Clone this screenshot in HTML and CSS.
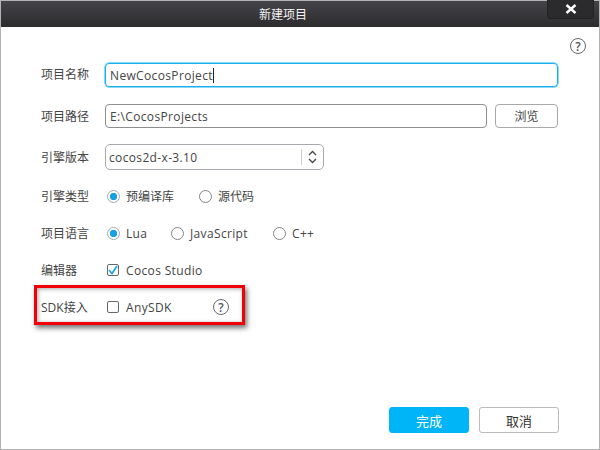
FILE: index.html
```html
<!DOCTYPE html>
<html lang="zh-CN">
<head>
  <meta charset="UTF-8" />
  <title>新建项目</title>
  <link rel="stylesheet" href="styles.css">
</head>
<body>
  <div class="dialog">
    <div class="titlebar">
      <span>新建项目</span>
      <button class="close">
        <svg width="14" height="10" viewBox="0 0 14 10"><path d="M2.5 1l9 8M11.5 1l-9 8" stroke="#fff" stroke-width="2.4" fill="none"/></svg>
      </button>
    </div>

    <div class="help-row">
      <span class="help">?</span>
    </div>

    <div class="form">
      <div class="row row-name">
        <label>项目名称</label>
        <div class="input input-focus"><span class="en">NewCocosProject</span><i class="caret"></i></div>
      </div>
      <div class="row row-path">
        <label>项目路径</label>
        <div class="input input-path"><span class="en">E:\CocosProjects</span></div>
        <button class="browse">浏览</button>
      </div>
      <div class="row row-select">
        <label>引擎版本</label>
        <div class="select">
          <span class="select-text en">cocos2d-x-3.10</span>
          <span class="select-arrows">
            <svg width="9" height="14" viewBox="0 0 9 14"><path d="M1 5l3.5-3.5L8 5M1 9l3.5 3.5L8 9" stroke="#444" stroke-width="1.3" fill="none"/></svg>
          </span>
        </div>
      </div>
      <div class="row">
        <label>引擎类型</label>
        <div class="option option-type"><i class="radio radio-on"></i>预编译库</div>
        <div class="option"><i class="radio"></i>源代码</div>
      </div>
      <div class="row">
        <label>项目语言</label>
        <div class="option option-lua"><i class="radio radio-on"></i><span class="en">Lua</span></div>
        <div class="option option-js"><i class="radio"></i><span class="en">JavaScript</span></div>
        <div class="option"><i class="radio"></i><span class="en">C++</span></div>
      </div>
      <div class="row">
        <label>编辑器</label>
        <div class="option">
          <i class="check check-on">
            <svg width="10" height="10" viewBox="0 0 10 10"><path d="M1 5l3 3.5L9 1" stroke="#1aa7e8" stroke-width="1.8" fill="none"/></svg>
          </i><span class="en">Cocos Studio</span>
        </div>
      </div>
      <div class="row">
        <label>SDK接入</label>
        <div class="option option-sdk"><i class="check"></i><span class="en">AnySDK</span></div>
        <span class="help">?</span>
      </div>
    </div>

    <div class="footer">
      <button class="btn btn-primary">完成</button>
      <button class="btn">取消</button>
    </div>

    <div class="highlight"></div>
  </div>
</body>
</html>
```

FILE: styles.css
```css
* {
  box-sizing: border-box;
}

html, body {
  margin: 0;
  height: 100%;
  overflow: hidden;
}

body {
  font-family: "Open Sans", "Noto Sans CJK SC", sans-serif;
  font-size: 12px;
  color: #444;
  background: #fff;
}

.en {
  letter-spacing: 0.35px;
}

.dialog {
  position: relative;
  width: 600px;
  height: 450px;
  display: flex;
  flex-direction: column;
  border: 1px solid #b4b4b4;
  background: #fff;
}

.titlebar {
  position: relative;
  height: 26px;
  flex: none;
  display: flex;
  align-items: center;
  justify-content: center;
  padding-right: 34px;
  background: linear-gradient(#444448, #2c2c2f);
  color: #f4f4f4;
}

.close {
  position: absolute;
  top: -1px;
  right: 5px;
  width: 47px;
  height: 19px;
  padding: 0;
  display: flex;
  align-items: center;
  justify-content: center;
  background: #2b2b2e;
  border: 1px solid #222;
  border-top: 0;
  border-radius: 0 0 4px 4px;
}

.help-row {
  height: 36px;
  flex: none;
  display: flex;
  justify-content: flex-end;
  align-items: center;
  padding: 2px 13px 0 0;
}

.help {
  width: 16px;
  height: 16px;
  display: flex;
  flex: none;
  align-items: center;
  justify-content: center;
  border: 1.5px solid #66666e;
  border-radius: 50%;
  font-size: 12px;
  font-weight: 600;
  color: #55555c;
}

.form {
  display: flex;
  flex-direction: column;
  gap: 16px;
  padding-left: 40px;
}

.row {
  height: 21px;
  padding-bottom: 1px;
  display: flex;
  align-items: center;
}

.row-name {
  height: 25px;
  align-items: flex-start;
}

.row-path {
  height: 24px;
  padding-bottom: 0;
}

.row-select {
  height: 26px;
  padding-bottom: 0;
}

label {
  width: 64px;
  flex: none;
}

.row-name label {
  line-height: 24px;
}

.input {
  height: 24px;
  display: flex;
  align-items: center;
  padding-left: 4px;
  border: 1px solid #8e8e8e;
  border-radius: 4px;
}

.input-focus {
  width: 453px;
  border-color: #18b0ee;
  box-shadow: 0 0 0 0.5px #18b0ee;
}

.caret {
  width: 1px;
  height: 15px;
  background: #222;
}

.input-path {
  width: 382px;
}

.browse {
  width: 63px;
  height: 24px;
  margin-left: 8px;
  padding: 0;
  background: #fff;
  border: 1px solid #a8a8a8;
  border-radius: 4px;
  font: inherit;
  color: #444;
}

.select {
  width: 219px;
  height: 26px;
  display: flex;
  align-items: center;
  border: 1px solid #a8a8ae;
  border-radius: 5px;
}

.select-text {
  flex: 1;
  padding-left: 3px;
}

.select-arrows {
  width: 22px;
  height: 16px;
  display: flex;
  align-items: center;
  justify-content: center;
  border-left: 1px solid #ccc;
}

.option {
  display: flex;
  align-items: center;
}

.option-type {
  width: 92px;
}

.option-lua {
  width: 64px;
}

.option-js {
  width: 102px;
}

.option-sdk {
  width: 108px;
}

.radio {
  width: 13px;
  height: 13px;
  margin: 0 6px 0 2px;
  flex: none;
  border: 1px solid #85858a;
  border-radius: 50%;
  background: #fff;
}

.radio-on {
  border-color: #9ab;
  background: radial-gradient(circle, #18a0e6 3.4px, #fff 4px);
}

.check {
  width: 12px;
  height: 12px;
  margin: 0 7px 0 2px;
  flex: none;
  display: flex;
  align-items: center;
  justify-content: center;
  border: 1px solid #66666c;
  border-radius: 2px;
}

.footer {
  margin-top: auto;
  padding: 0 40px 16px 0;
  display: flex;
  justify-content: flex-end;
  gap: 10px;
}

.btn {
  width: 80px;
  height: 26px;
  padding: 0;
  background: #fff;
  border: 1px solid #bcbcbc;
  border-radius: 3px;
  font: inherit;
  font-size: 13px;
  color: #333;
}

.btn-primary {
  background: #00b4f8;
  border-color: #00b4f8;
  color: #fff;
}

/* red annotation drawn on top of the screenshot */
.highlight {
  position: absolute;
  left: 33px;
  top: 284px;
  width: 211px;
  height: 40px;
  border: 3px solid #f00008;
  box-shadow: 2px 3px 5px rgba(0, 0, 0, 0.55), inset 1px 1px 4px rgba(0, 0, 0, 0.35);
}
```
